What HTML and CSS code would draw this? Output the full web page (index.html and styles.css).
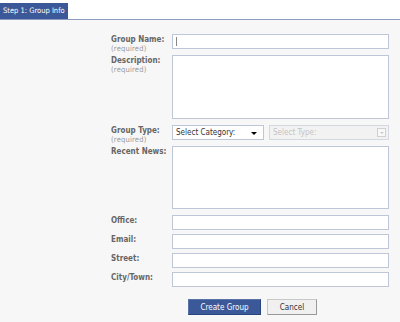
FILE: index.html
```html
<!DOCTYPE html>
<html lang="en">
<head>
    <meta charset="UTF-8">
    <title>Create Group - Step 1</title>
    <link rel="stylesheet" href="styles.css">
</head>
<body>
    <div class="tabs">
        <span class="tab active">Step 1: Group Info</span>
    </div>

    <main class="panel">
        <form class="group-form">
            <div class="row">
                <label class="label">Group Name:<small>(required)</small></label>
                <div class="field input"><span class="caret"></span></div>
            </div>
            <div class="row">
                <label class="label">Description:<small>(required)</small></label>
                <div class="field textarea"></div>
            </div>
            <div class="row">
                <label class="label">Group Type:<small>(required)</small></label>
                <div class="selects">
                    <div class="field select">Select Category:<span class="arrow"></span></div>
                    <div class="field select disabled">Select Type:<span class="drop-btn"><span class="mini-arrow"></span></span></div>
                </div>
            </div>
            <div class="row">
                <label class="label">Recent News:</label>
                <div class="field textarea news"></div>
            </div>
            <div class="row tight">
                <label class="label">Office:</label>
                <div class="field input"></div>
            </div>
            <div class="row tight">
                <label class="label">Email:</label>
                <div class="field input"></div>
            </div>
            <div class="row tight">
                <label class="label">Street:</label>
                <div class="field input"></div>
            </div>
            <div class="row tight">
                <label class="label">City/Town:</label>
                <div class="field input"></div>
            </div>
            <div class="buttons">
                <button type="button" class="btn primary">Create Group</button>
                <button type="button" class="btn">Cancel</button>
            </div>
        </form>
    </main>
</body>
</html>
```

FILE: styles.css
```css
body {
    margin: 0;
    padding: 0;
    font-family: Tahoma, "DejaVu Sans Condensed", "Liberation Sans", sans-serif;
    font-size: 8px;
    background-color: #f7f7f7;
    height: 322px;
    overflow: hidden;
}

.tabs {
    background-color: #fff;
    height: 19px;
    border-bottom: 1px solid #8a9cc2;
    display: flex;
    align-items: flex-end;
}

.tab {
    display: block;
    height: 16px;
    line-height: 16px;
    padding: 0 3px;
    white-space: nowrap;
    font-size: 7.5px;
}

.tab.active {
    background-color: #3b5998;
    color: #fff;
}

.panel {
    padding: 14px 0 0 111px;
}

.row {
    display: flex;
    margin-bottom: 6px;
}

.row.tight {
    margin-bottom: 4px;
}

.label {
    width: 61px;
    height: 13px;
    flex: none;
    font-weight: bold;
    color: #666;
    line-height: 8px;
    padding-top: 2px;
}

.label small {
    display: block;
    font-size: 7.5px;
    font-weight: normal;
    color: #999;
    letter-spacing: 0.2px;
    margin-top: 1px;
}

.field {
    box-sizing: border-box;
    background-color: #fff;
    border: 1px solid #bdc7d8;
    width: 217px;
    height: 15px;
    position: relative;
}

.textarea {
    height: 64px;
}

.textarea.news {
    height: 63px;
}

.caret {
    position: absolute;
    left: 3px;
    top: 2px;
    width: 1px;
    height: 9px;
    background-color: #888;
}

.selects {
    display: flex;
    gap: 5px;
}

.select {
    color: #333;
    line-height: 13px;
    padding-left: 3px;
    width: 92px;
}

.select .arrow {
    position: absolute;
    right: 6px;
    top: 6px;
    border-left: 3px solid transparent;
    border-right: 3px solid transparent;
    border-top: 3px solid #000;
}

.select.disabled {
    width: 120px;
    background-color: #f2f2f2;
    border-color: #d4d8e0;
    color: #c4c4c4;
}

.drop-btn {
    position: absolute;
    right: 2px;
    top: 2px;
    width: 9px;
    height: 9px;
    box-sizing: border-box;
    border: 1px solid #d0d0d0;
    background-color: #f8f8f8;
}

.mini-arrow {
    position: absolute;
    left: 2px;
    top: 3px;
    border-left: 2px solid transparent;
    border-right: 2px solid transparent;
    border-top: 2px solid #c8c8c8;
}

.buttons {
    display: flex;
    gap: 6px;
    margin: 12px 0 0 77px;
}

.btn {
    font-family: inherit;
    font-size: 8px;
    height: 16px;
    padding: 0;
    border: 1px solid #c8c8c8;
    border-right-color: #999;
    border-bottom-color: #999;
    background-color: #f0f0f0;
    color: #333;
    width: 50px;
}

.btn.primary {
    width: 73px;
    background-color: #3b5998;
    color: #fff;
    border-color: #5973a9 #29447e #29447e #5973a9;
}
```
